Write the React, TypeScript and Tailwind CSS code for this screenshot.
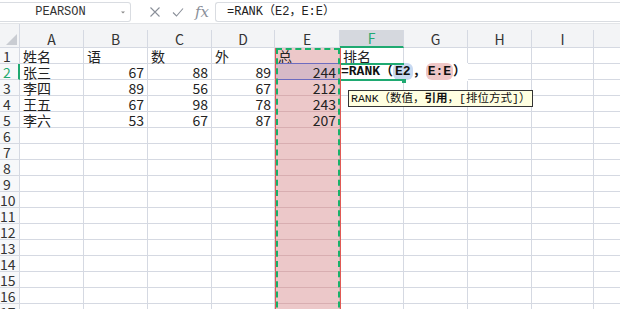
import React from 'react';

const cols = [
  { key: 'A', w: 64 },
  { key: 'B', w: 64 },
  { key: 'C', w: 64 },
  { key: 'D', w: 63 },
  { key: 'E', w: 65 },
  { key: 'F', w: 64 },
  { key: 'G', w: 64 },
  { key: 'H', w: 64 },
  { key: 'I', w: 62 },
  { key: '', w: 64 },
];

type Cell = { v: string; num?: boolean };

const data: Cell[][] = [
  [{ v: '姓名' }, { v: '语' }, { v: '数' }, { v: '外' }, { v: '总' }, { v: '排名' }],
  [{ v: '张三' }, { v: '67', num: true }, { v: '88', num: true }, { v: '89', num: true }, { v: '244', num: true }],
  [{ v: '李四' }, { v: '89', num: true }, { v: '56', num: true }, { v: '67', num: true }, { v: '212', num: true }],
  [{ v: '王五' }, { v: '67', num: true }, { v: '98', num: true }, { v: '78', num: true }, { v: '243', num: true }],
  [{ v: '李六' }, { v: '53', num: true }, { v: '67', num: true }, { v: '87', num: true }, { v: '207', num: true }],
];

const ROWS = 17;
const cjk = "font-[family-name:'Noto_Sans_CJK_SC','Noto_Sans',sans-serif]";
const mono = "font-[family-name:'Liberation_Mono','Noto_Sans_CJK_SC',monospace]";

function Toolbar() {
  return (
    <div className="flex h-[24px] items-center border-b border-[#e3e5e8] bg-white pt-[1px]">
      <div className="flex h-[20px] w-[131px] items-center rounded-r-[3px] border border-l-0 border-[#d9dce1]">
        <span className={`flex-1 pl-[2px] text-center text-[12px] text-[#333] ${mono}`}>PEARSON</span>
        <svg width="8" height="8" viewBox="0 0 8 8" className="mr-[3px]">
          <path d="M2 3.5 L4 5.5 L6 3.5 Z" fill="#8a8a8a" />
        </svg>
      </div>
      <div className="ml-[18px] flex w-[66px] items-center gap-[11px]">
        <svg width="12" height="12" viewBox="0 0 12 12">
          <path d="M1.5 1.5 L10.5 10.5 M10.5 1.5 L1.5 10.5" stroke="#8a8f99" strokeWidth="1.1" fill="none" />
        </svg>
        <svg width="12" height="12" viewBox="0 0 12 12">
          <path d="M1 6.5 L4.5 10 L11 2.5" stroke="#8a8f99" strokeWidth="1.1" fill="none" />
        </svg>
        <span className="font-[family-name:'DejaVu_Serif',serif] text-[15px] italic leading-none text-[#8a8f99]">fx</span>
      </div>
      <div className="flex h-[20px] flex-1 items-center rounded-l-[3px] border border-r-0 border-[#d9dce1] pl-[11px]">
        <span className={`text-[12px] text-[#222] ${mono}`}>=RANK（E2，E:E）</span>
      </div>
    </div>
  );
}

function HeaderRow() {
  return (
    <div className="flex h-[24px] bg-[#f3f4f6]">
      <div className="relative w-[20px] shrink-0 border-b border-r border-[#d5d9e2]">
        <svg width="11" height="11" viewBox="0 0 11 11" className="absolute bottom-[2px] right-[2px]">
          <path d="M11 0 L11 11 L0 11 Z" fill="#c9ccd2" />
        </svg>
      </div>
      {cols.map((c, i) => {
        const active = c.key === 'F';
        return (
          <div key={i} style={{ width: c.w }} className="flex shrink-0 flex-col justify-end">
            <div
              className={`flex h-[18px] items-center justify-center border-r border-[#d5d9e2] text-[14px] leading-[16px] ${cjk} ${
                active
                  ? 'border-b-2 border-b-[#1fa971] bg-[#d5d8de] text-[#1fa971]'
                  : 'border-b border-b-[#d5d9e2] text-[#333]'
              }`}
            >
              {c.key}
            </div>
          </div>
        );
      })}
    </div>
  );
}

function Row({ r }: { r: number }) {
  const cells = data[r] ?? [];
  const activeRow = r === 1;
  return (
    <div className="flex h-[16px]">
      <div
        className={`flex w-[20px] shrink-0 items-center border-b border-r border-[#d5d9e2] bg-[#f7f8fa] ${
          activeRow ? 'border-r-2 border-r-[#1fa971]' : ''
        }`}
      >
        <span
          className={`w-[14px] text-center text-[14px] leading-[14px] ${cjk} ${
            activeRow ? 'text-[#1fa971]' : 'text-[#333]'
          }`}
        >
          {r + 1}
        </span>
      </div>
      {cols.map((c, ci) => {
        const cell = cells[ci];
        const isE = c.key === 'E';
        const e2 = isE && r === 1;
        let cls = 'h-[16px] border-b border-r border-[#d5d9e2] bg-white';
        if (isE) cls = 'h-[16px] border-b border-r border-[#d8aeb1] bg-[#ecc8c9]';
        if (e2) cls = '-mt-[1px] h-[17px] border-y border-r border-[#6d6cc0] border-r-[#d8aeb1] bg-[#d7bac7]';
        return (
          <div
            key={ci}
            style={{ width: c.w }}
            className={`flex shrink-0 items-center px-[3px] text-[14px] leading-[14px] text-[#222] ${cjk} ${cls} ${
              cell?.num ? 'justify-end' : 'justify-start'
            }`}
          >
            {cell?.v}
          </div>
        );
      })}
    </div>
  );
}

export default function App() {
  return (
    <div className="h-[309px] w-[620px] overflow-hidden bg-white">
      <Toolbar />
      <div className="relative">
        <HeaderRow />
        {Array.from({ length: ROWS }).map((_, r) => (
          <Row key={r} r={r} />
        ))}

        {/* reference marquee on column E */}
        <div className="pointer-events-none absolute left-[275px] top-[24px] h-[290px] w-[66px] border-x border-[#e15a55]">
          <div className="h-full w-full border-x-2 border-t-2 border-dashed border-[#17b26a]" />
        </div>

        {/* in-cell editor on F2 */}
        <div className="absolute left-[341px] top-[39px] flex h-[18px] w-[127px] items-center bg-white">
          <div className="absolute left-0 top-0 h-[2px] w-[63px] bg-[#1fa971]" />
          <div className="absolute bottom-0 left-0 h-[2px] w-[63px] bg-[#1fa971]" />
          <div className="absolute -bottom-[2px] left-[61px] h-[4px] w-[4px] bg-[#1fa971]" />
          <span className={`whitespace-nowrap text-[13px] font-bold leading-[14px] text-[#111] ${mono}`}>
            =RANK（<span className="rounded-[6px] bg-[#c9d9f1] px-[2px] py-[1px]">E2</span>，
            <span className="rounded-[6px] bg-[#efc6c6] px-[2px] py-[1px]">E:E</span>）
          </span>
        </div>

        {/* argument tooltip */}
        <div
          className={`absolute left-[348px] top-[66px] flex h-[17px] items-center whitespace-nowrap border border-[#333] bg-[#ffffe1] px-[2px] text-[11.5px] leading-[14px] text-[#111] ${mono}`}
        >
          RANK（数值，<b>引用</b>，[排位方式]）
        </div>
      </div>
    </div>
  );
}
